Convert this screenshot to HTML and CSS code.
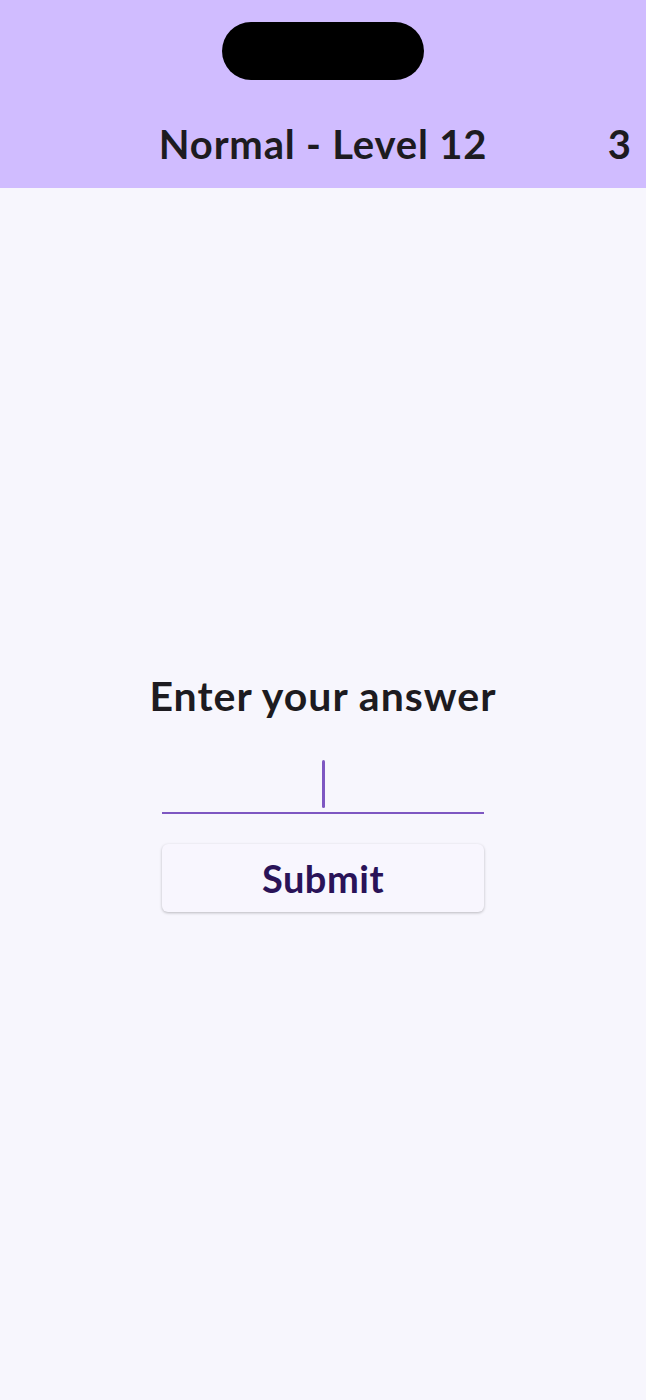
FILE: index.html
```html
<!DOCTYPE html>
<html lang="en">
<head>
    <meta charset="UTF-8">
    <meta name="viewport" content="width=device-width, initial-scale=1.0">
    <title>Normal - Level 12</title>
    <link rel="stylesheet" href="styles.css">
</head>
<body>
    <div class="header">
        <div class="notch"></div>
        <div class="title-row">
            <h1 class="title">Normal - Level 12</h1>
            <span class="score">3</span>
        </div>
    </div>

    <div class="content">
        <h2 class="prompt">Enter your answer</h2>
        <div class="answer-field">
            <span class="cursor"></span>
        </div>
        <button class="submit">Submit</button>
    </div>
</body>
</html>
```

FILE: styles.css
```css
body {
    margin: 0;
    min-height: 1400px;
    background-color: #f7f6fd;
    font-family: Lato, "Open Sans", sans-serif;
    color: #1d1b20;
}
.header {
    height: 188px;
    background-color: #d0bcff;
    display: flex;
    flex-direction: column;
    align-items: center;
}
.notch {
    width: 202px;
    height: 58px;
    margin-top: 22px;
    border-radius: 29px;
    background-color: #000;
}
.title-row {
    position: relative;
    width: 100%;
    margin-top: 38px;
    display: flex;
    justify-content: center;
}
.title {
    margin: 0;
    font-size: 40px;
    font-weight: 700;
    line-height: 52px;
    letter-spacing: 0.8px;
}
.score {
    position: absolute;
    right: 15px;
    top: 0;
    font-size: 40px;
    font-weight: 700;
    line-height: 52px;
}
.content {
    display: flex;
    flex-direction: column;
    align-items: center;
    padding-top: 482px;
}
.prompt {
    margin: 0;
    font-size: 41px;
    font-weight: 700;
    line-height: 52px;
    letter-spacing: 1px;
}
.answer-field {
    width: 322px;
    height: 54px;
    margin-top: 38px;
    border-bottom: 2px solid #7e57c2;
    display: flex;
    justify-content: center;
    align-items: flex-end;
    padding-bottom: 4px;
    box-sizing: border-box;
}
.cursor {
    width: 3px;
    height: 48px;
    border-radius: 2px;
    background-color: #7e57c2;
}
.submit {
    width: 322px;
    height: 68px;
    margin-top: 30px;
    border: none;
    border-radius: 6px;
    background-color: #f8f6fe;
    box-shadow: 0 1px 3px rgba(0, 0, 0, 0.25);
    font-family: Lato, "Open Sans", sans-serif;
    font-size: 38px;
    font-weight: 700;
    letter-spacing: 0.5px;
    color: #2a1358;
    cursor: pointer;
}
```
